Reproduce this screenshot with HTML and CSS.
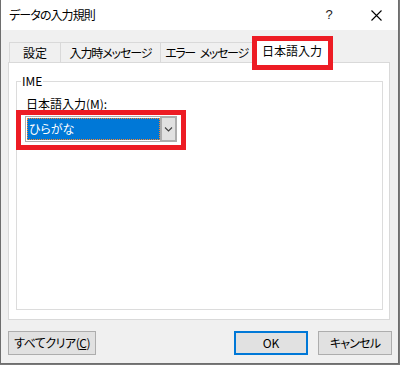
FILE: index.html
```html
<!DOCTYPE html>
<html lang="ja">
<head>
<meta charset="utf-8">
<link rel="stylesheet" href="styles.css">
</head>
<body>
<div class="dialog">
  <div class="titlebar">
    <span class="title">データの入力規則</span>
    <span class="tb-btn help">?</span>
    <span class="tb-btn close"><svg width="11" height="11" viewBox="0 0 11 11"><path d="M0.5 0.5L10.5 10.5M10.5 0.5L0.5 10.5" stroke="#000" stroke-width="1.1" fill="none"/></svg></span>
  </div>
  <div class="body">
    <div class="tabs">
      <div class="tab t1">設定</div>
      <div class="tab t2">入力時メッセージ</div>
      <div class="tab t3">エラー&ensp;メッセージ</div>
      <div class="tab active">日本語入力</div>
    </div>
    <div class="panel">
      <fieldset class="group">
        <legend>IME</legend>
        <div class="label">日本語入力(M):</div>
        <div class="combo">
          <div class="combo-value"><span>ひらがな</span></div>
          <div class="combo-btn"><svg width="9" height="6" viewBox="0 0 9 6"><path d="M1 1.5L4.5 5L8 1.5" stroke="#404040" stroke-width="1.1" fill="none"/></svg></div>
        </div>
      </fieldset>
    </div>
    <div class="buttons">
      <button class="btn clear">すべてクリア(<u>C</u>)</button>
      <div class="btn-group">
        <button class="btn ok">OK</button>
        <button class="btn cancel">キャンセル</button>
      </div>
    </div>
  </div>
  <div class="mark mark-tab"></div>
  <div class="mark mark-combo"></div>
</div>
</body>
</html>
```
FILE: styles.css
```css
html, body {
  margin: 0;
  padding: 0;
  background: #7a7a7a;
}
body {
  width: 400px;
  height: 365px;
  font-family: "Noto Sans CJK JP", "Noto Sans", sans-serif;
  font-feature-settings: "palt";
  font-size: 12px;
  color: #000;
}
.dialog {
  position: relative;
  width: 399px;
  height: 364px;
  box-sizing: border-box;
  border: 1px solid #6e6e6e;
  border-top: none;
  background: #f0f0f0;
  display: flex;
  flex-direction: column;
}
.titlebar {
  height: 30px;
  background: #fff;
  display: flex;
  align-items: center;
  flex: none;
}
.title {
  flex: 1;
  padding-left: 8px;
  line-height: 16px;
  margin-top: -1px;
  letter-spacing: -0.9px;
}
.tb-btn {
  width: 46px;
  height: 30px;
  display: flex;
  align-items: center;
  justify-content: center;
}
.help {
  font-family: "Liberation Sans", sans-serif;
  font-size: 13px;
  color: #222;
  margin-top: -1px;
}
.close svg {
  display: block;
  margin-left: 2px;
}
.body {
  flex: 1;
  padding: 9px 6px 0 7px;
  display: flex;
  flex-direction: column;
}
.tabs {
  display: flex;
  align-items: flex-end;
  height: 23px;
  margin-left: 1px;
  position: relative;
  z-index: 1;
}
.tab {
  height: 20px;
  box-sizing: border-box;
  border: 1px solid #d9d9d9;
  border-bottom: none;
  margin-right: -1px;
  display: flex;
  align-items: center;
  justify-content: center;
  line-height: 16px;
  white-space: nowrap;
}
.t1 { width: 52px; }
.t2 { width: 101px; letter-spacing: -1.1px; }
.t3 { width: 93px; letter-spacing: -1.3px; }
.tab.active {
  width: 80px;
  height: 24px;
  margin-bottom: -1px;
  background: #fff;
  padding-bottom: 1px;
}
.panel {
  width: 382px;
  height: 258px;
  box-sizing: border-box;
  border: 1px solid #d9d9d9;
  background: #fff;
  display: flex;
  flex-direction: column;
}
.group {
  flex: 1;
  margin: 10px 6px 9px 7px;
  border: 1px solid #dcdcdc;
  padding: 7px 9px 0 9px;
  min-width: 0;
}
.group legend {
  padding: 0 1px;
  margin-left: -5px;
  line-height: 16px;
}
.label {
  line-height: 16px;
}
.combo {
  margin-top: 4px;
  margin-left: -1px;
  width: 152px;
  height: 26px;
  box-sizing: border-box;
  border: 1px solid #adadad;
  display: flex;
  padding: 1px 0 1px 1px;
}
.combo-value {
  flex: 1;
  background: #0078d7;
  border: 1px dotted #ff8728;
  color: #fff;
  display: flex;
  align-items: center;
  padding-left: 1px;
  line-height: 16px;
}
.combo-btn {
  width: 17px;
  margin: -2px -1px -2px 0;
  box-sizing: border-box;
  border: 2px solid #adadad;
  background: #e1e1e1;
  display: flex;
  align-items: center;
  justify-content: center;
}
.combo-btn svg { display: block; }
.buttons {
  margin-top: 11px;
  display: flex;
  justify-content: space-between;
}
.btn-group {
  display: flex;
  gap: 10px;
}
.btn {
  height: 24px;
  box-sizing: border-box;
  border: 1px solid #adadad;
  background: #e1e1e1;
  font-family: inherit;
  font-feature-settings: "palt";
  font-size: 12px;
  color: #000;
  padding: 0;
  line-height: 16px;
}
.clear { width: 88px; letter-spacing: -0.5px; }
.ok {
  width: 74px;
  border: 2px solid #0078d7;
}
.cancel { width: 74px; letter-spacing: -0.8px; }
.mark {
  position: absolute;
  box-sizing: border-box;
  border: 5px solid #ed1c24;
  z-index: 2;
}
.mark-tab {
  left: 251px;
  top: 36px;
  width: 81px;
  height: 34px;
}
.mark-combo {
  left: 15px;
  top: 110px;
  width: 170px;
  height: 40px;
}
```
